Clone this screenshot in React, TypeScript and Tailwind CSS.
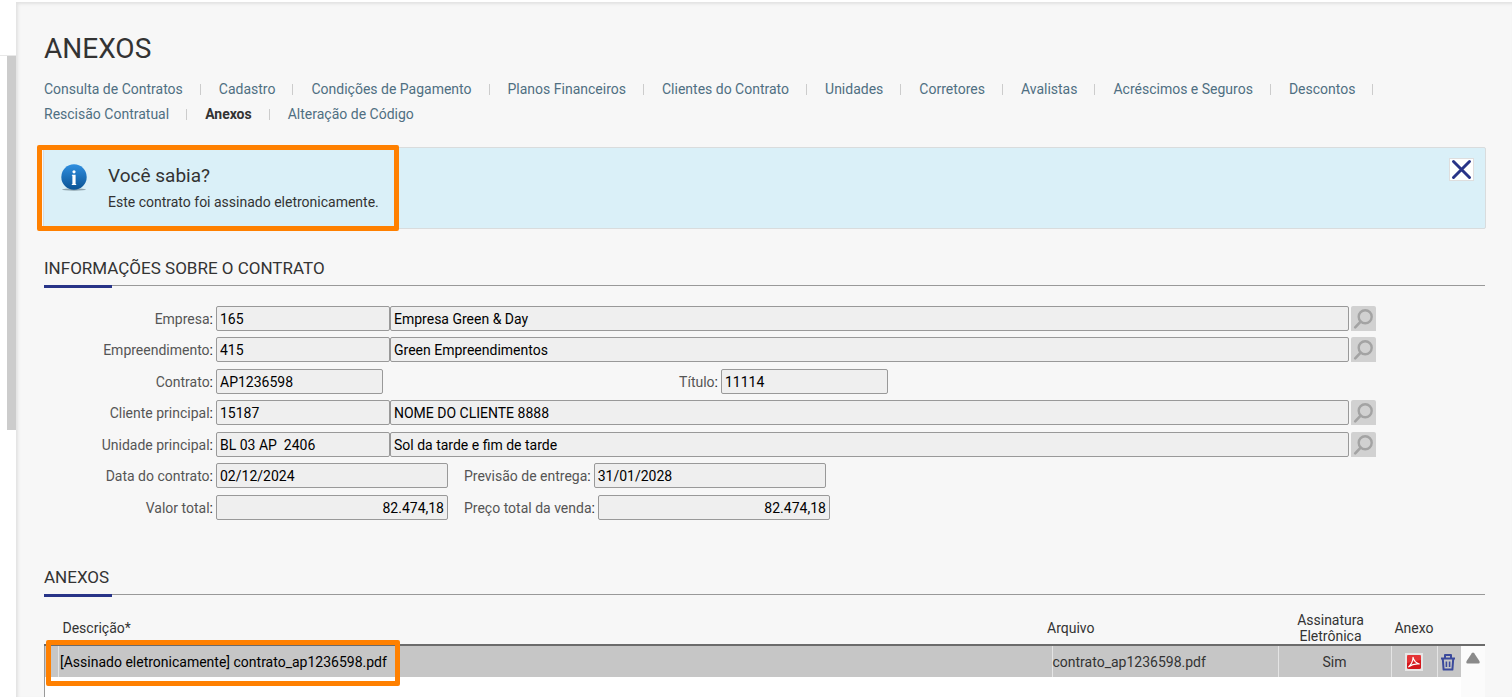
import React from 'react';
import clsx from 'clsx';

const tabs = [
  'Consulta de Contratos',
  'Cadastro',
  'Condições de Pagamento',
  'Planos Financeiros',
  'Clientes do Contrato',
  'Unidades',
  'Corretores',
  'Avalistas',
  'Acréscimos e Seguros',
  'Descontos',
  'Rescisão Contratual',
  'Anexos',
  'Alteração de Código',
];

function InfoIcon() {
  return (
    <svg width="28" height="28" viewBox="0 0 28 28" aria-hidden="true">
      <defs>
        <linearGradient id="info" x1="0" y1="0" x2="0" y2="1">
          <stop offset="0" stopColor="#2f8fe0" />
          <stop offset="1" stopColor="#0b5394" />
        </linearGradient>
      </defs>
      <ellipse cx="14" cy="25.500" rx="12" ry="1.200" fill="#8fa3ad" />
      <circle cx="14" cy="13" r="12.700" fill="url(#info)" />
      <circle cx="14" cy="7.800" r="1.600" fill="#fff" />
      <path d="M12 10.800h3.600v9.200h.6v1h-4.400v-1h.6v-8.200h-.6z" fill="#fff" />
    </svg>
  );
}

function SearchIcon() {
  return (
    <svg width="25" height="25" viewBox="0 0 25 25" fill="none" stroke="#a3a3a3" aria-hidden="true">
      <circle cx="14.2" cy="10.7" r="6.5" strokeWidth="2.4" />
      <path d="M9.6 15.6 4.2 21.4" strokeWidth="2.6" strokeLinecap="round" />
    </svg>
  );
}

function PdfIcon() {
  return (
    <svg width="18" height="18" viewBox="0 0 18 18" aria-hidden="true">
      <rect width="18" height="18" fill="#e6e6e6" />
      <rect x="2" y="2" width="14" height="14" rx="1.5" fill="#d3161b" />
      <path d="M2 2h14v5L2 10z" fill="#f0474a" opacity=".6" />
      <path
        d="M3.6 13.8C6 11.600 8 8 8 4.200c.8 3.600 2.600 6 6.400 6.800-3.600-.4-7.400.4-10.800 2.800z"
        fill="none"
        stroke="#fff"
        strokeWidth="1.1"
        strokeLinejoin="round"
      />
    </svg>
  );
}

function TrashIcon() {
  return (
    <svg width="16" height="18" viewBox="0 0 16 18" fill="none" stroke="#3b4a9c" strokeWidth="2" aria-hidden="true">
      <path d="M1 5.500h14M5 5V2h6v3" strokeLinejoin="round" />
      <path d="M2.800 6l.8 10.600h8.800L13.200 6" strokeLinejoin="round" />
      <path d="M6.400 8.500v5.500M9.600 8.500v5.500" strokeWidth="1.600" />
    </svg>
  );
}

function SectionTitle({ children }: { children: React.ReactNode }) {
  return (
    <div>
      <h2 className="pb-[7px] text-[17px] leading-5 text-[#333]">{children}</h2>
      <div className="h-[3px] border-t border-[#999]">
        <div className="-mt-px h-[3px] w-[68px] bg-[#283488]" />
      </div>
    </div>
  );
}

function Row({ children }: { children: React.ReactNode }) {
  return <div className="flex items-center pb-[6px] even:pb-[7px]">{children}</div>;
}

type FieldProps = {
  id: string;
  label: string;
  value: string;
  labelClass?: string;
  inputClass: string;
};

const inputBase = 'h-[25px] rounded-xs border border-[#999] bg-[#efefef] px-[3px] text-sm text-black outline-none';

function Field({ id, label, value, labelClass, inputClass }: FieldProps) {
  return (
    <>
      <label htmlFor={id} className={clsx('mr-[3px] text-right text-[#555]', labelClass)}>
        {label}
        <span className="text-[#222]">:</span>
      </label>
      <input id={id} readOnly value={value} className={clsx(inputBase, inputClass)} />
    </>
  );
}

function LookupRow({ id, label, code, name }: { id: string; label: string; code: string; name: string }) {
  return (
    <Row>
      <Field id={id} label={label} value={code} labelClass="w-[169px]" inputClass="w-[174px]" />
      <input aria-label={`${label} nome`} readOnly value={name} className={clsx(inputBase, 'min-w-0 flex-1')} />
      <button type="button" aria-label={`Pesquisar ${label}`} className="ml-0.5 rounded-t-xs bg-[#d1d1d1]">
        <SearchIcon />
      </button>
    </Row>
  );
}

export default function App() {
  return (
    <div className="flex min-h-screen flex-col bg-[#f7f7f7] font-[Roboto,sans-serif] text-sm text-[#333]">
      <div className="h-0.5 bg-white" />
      <div className="flex flex-1">
        <aside className="flex w-4 shrink-0 flex-col bg-white">
          <div className="h-[54px] border-b border-[#e8e8e8]" />
          <div className="ml-[7px] h-[374px] bg-[#ccc]" />
        </aside>

        <main className="min-w-0 flex-1 pt-[31px] pr-[27px] pl-7 shadow-[inset_2px_2px_3px_#e2e2e2]">
          <h1 className="text-[28px] leading-8">ANEXOS</h1>

          <nav className="mt-3 flex flex-wrap">
            {tabs.map((tab, i) => (
              <div key={tab} className="flex items-center">
                <a
                  href="#"
                  className={clsx('leading-[25px]', tab === 'Anexos' ? 'font-bold text-[#333]' : 'text-[#4f6f82]')}
                >
                  {tab}
                </a>
                {i < tabs.length - 1 && <span className="mr-[18px] ml-[17px] h-[11px] w-px bg-[#ccc]" />}
              </div>
            ))}
          </nav>

          <section className="relative mt-5 -mr-px -ml-px flex h-[82px] items-start rounded-xs border border-[#d9dcdd] bg-[#daf0f8]">
            <div className="mt-4 ml-4">
              <InfoIcon />
            </div>
            <div className="mt-4 ml-5 flex-1">
              <h3 className="text-[19px] leading-6">Você sabia?</h3>
              <p className="mt-1 text-sm leading-5">Este contrato foi assinado eletronicamente.</p>
            </div>
            <button type="button" aria-label="Fechar" className="mt-2.5 mr-[11px] border border-[#dedede] bg-white">
              <svg width="23" height="21" viewBox="0 0 23 21" stroke="#283488" strokeWidth="3" strokeLinecap="round">
                <path d="M3.5 2.5l16 16M19.5 2.5l-16 16" />
              </svg>
            </button>
            <div className="absolute -top-[3px] -left-[7px] h-[86px] w-[362px] rounded-xs border-5 border-[#ff8000]" />
          </section>

          <section className="mt-[29px]">
            <SectionTitle>INFORMAÇÕES SOBRE O CONTRATO</SectionTitle>
            <form className="mt-[18px] mr-[109px]">
              <LookupRow id="empresa" label="Empresa" code="165" name="Empresa Green & Day" />
              <LookupRow id="empreendimento" label="Empreendimento" code="415" name="Green Empreendimentos" />
              <Row>
                <Field id="contrato" label="Contrato" value="AP1236598" labelClass="w-[169px]" inputClass="w-[167px]" />
                <Field id="titulo" label="Título" value="11114" labelClass="w-[335px]" inputClass="w-[167px]" />
              </Row>
              <LookupRow id="cliente" label="Cliente principal" code="15187" name="NOME DO CLIENTE 8888" />
              <LookupRow id="unidade" label="Unidade principal" code="BL 03 AP  2406" name="Sol da tarde e fim de tarde" />
              <Row>
                <Field id="data" label="Data do contrato" value="02/12/2024" labelClass="w-[169px]" inputClass="w-[232px]" />
                <Field id="previsao" label="Previsão de entrega" value="31/01/2028" labelClass="ml-4" inputClass="w-[232px]" />
              </Row>
              <Row>
                <Field id="valor" label="Valor total" value="82.474,18" labelClass="w-[169px]" inputClass="w-[232px] text-right" />
                <Field
                  id="preco"
                  label="Preço total da venda"
                  value="82.474,18"
                  labelClass="ml-4"
                  inputClass="w-[232px] text-right"
                />
              </Row>
            </form>
          </section>

          <section className="relative mt-[41px]">
            <SectionTitle>ANEXOS</SectionTitle>
            <table className="mt-[15px] w-full table-fixed border-collapse">
              <colgroup>
                <col className="w-[14px]" />
                <col />
                <col className="w-[226px]" />
                <col className="w-[113px]" />
                <col className="w-[46px]" />
                <col className="w-[24px]" />
                <col className="w-[24px]" />
              </colgroup>
              <thead>
                <tr className="h-8 border-b-2 border-[#6b6b6b] leading-4">
                  <th colSpan={2} className="pl-[18px] text-left font-normal">
                    Descrição*
                  </th>
                  <th className="text-left font-normal">
                    <span className="-ml-[5px]">Arquivo</span>
                  </th>
                  <th className="pr-2 font-normal">
                    Assinatura
                    <br />
                    Eletrônica
                  </th>
                  <th className="font-normal">Anexo</th>
                  <th />
                  <th />
                </tr>
              </thead>
              <tbody>
                <tr className="h-8 bg-[#c6c6c6]">
                  <td className="border-l border-l-[#999]" />
                  <td className="border-l border-[#e4e4e4]">
                    <input
                      aria-label="Descrição"
                      readOnly
                      value="[Assinado eletronicamente] contrato_ap1236598.pdf"
                      className="block w-full bg-transparent pl-px text-black outline-none"
                    />
                  </td>
                  <td className="border-l border-[#e4e4e4]">contrato_ap1236598.pdf</td>
                  <td className="border-l border-[#e4e4e4] text-center">Sim</td>
                  <td className="border-l border-[#e4e4e4]">
                    <button type="button" aria-label="Abrir PDF" className="mx-auto block">
                      <PdfIcon />
                    </button>
                  </td>
                  <td className="border-l border-[#e4e4e4]">
                    <button type="button" aria-label="Excluir" className="ml-0.5 block">
                      <TrashIcon />
                    </button>
                  </td>
                  <td rowSpan={2} className="bg-[#fbfbfb] pt-1.5 align-top">
                    <svg className="mx-auto" width="14" height="12" viewBox="0 0 14 12" fill="#8a8a8a" aria-hidden="true">
                      <path d="M5.8 1.2Q7 0 8.2 1.2L13.4 9Q14.3 11.500 12.5 11.500H1.5Q-.3 11.500.6 9z" />
                    </svg>
                  </td>
                </tr>
                <tr className="h-5 bg-white">
                  <td colSpan={6} className="border-l border-l-[#999]" />
                </tr>
              </tbody>
            </table>
            <div className="absolute top-[73px] left-[2px] h-[46px] w-[354px] rounded-xs border-5 border-[#ff8000]" />
          </section>
        </main>
      </div>
    </div>
  );
}
